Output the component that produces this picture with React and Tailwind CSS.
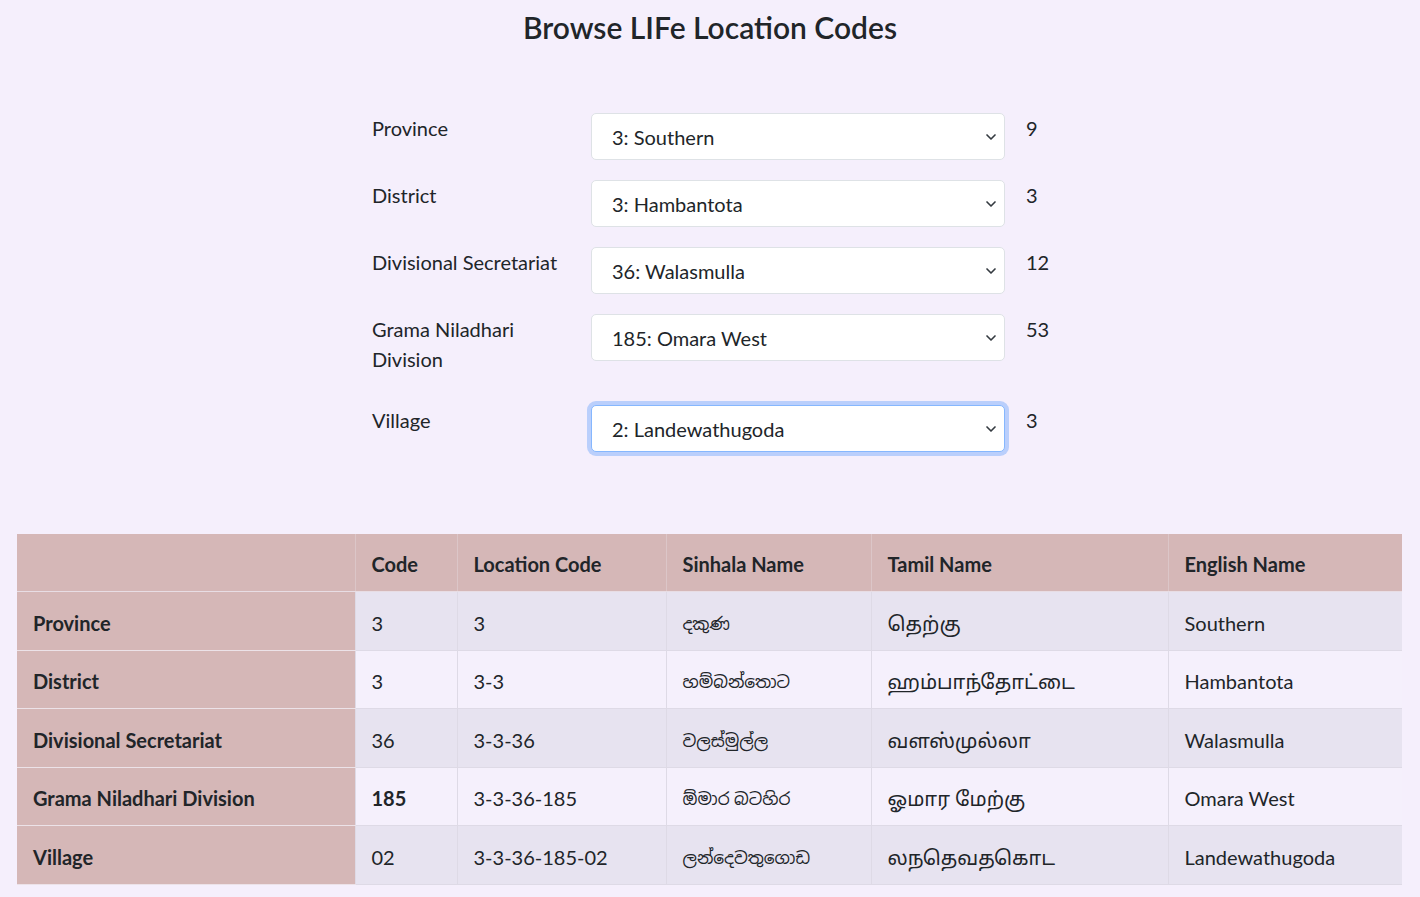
import React from "react";
import { ChevronDown } from "lucide-react";

const font = { fontFamily: "Lato, 'Noto Sans', 'Noto Sans Sinhala', 'Noto Sans Tamil', 'Iskoola Pota', Latha, sans-serif" };

const levels = [
    { label: "Province", value: "3: Southern", count: "9" },
    { label: "District", value: "3: Hambantota", count: "3" },
    { label: "Divisional Secretariat", value: "36: Walasmulla", count: "12" },
    { label: "Grama Niladhari Division", value: "185: Omara West", count: "53", wrap: true },
    { label: "Village", value: "2: Landewathugoda", count: "3", focused: true },
];

const rows = [
    { name: "Province", code: "3", loc: "3", si: "දකුණ", ta: "தெற்கு", en: "Southern" },
    { name: "District", code: "3", loc: "3-3", si: "හම්බන්තොට", ta: "ஹம்பாந்தோட்டை", en: "Hambantota" },
    { name: "Divisional Secretariat", code: "36", loc: "3-3-36", si: "වලස්මුල්ල", ta: "வளஸ்முல்லா", en: "Walasmulla" },
    { name: "Grama Niladhari Division", code: "185", loc: "3-3-36-185", si: "ඕමාර බටහිර", ta: "ஓமார மேற்கு", en: "Omara West", bold: true },
    { name: "Village", code: "02", loc: "3-3-36-185-02", si: "ලන්දෙවතුගොඩ", ta: "லநதெவதகொட", en: "Landewathugoda" },
];

const cols = ["w-[338px]", "w-[102px]", "w-[209px]", "w-[205px]", "w-[297px]", "w-[234px]"];

function LevelRow({ item }) {
    return (
        <div className="flex items-start mb-[20px]">
            <label className={`w-[219px] shrink-0 text-[20px] leading-[30px] text-[#212529] ${item.wrap ? "pr-[40px] pb-[11px]" : "pb-[9px]"}`}>
                {item.label}
            </label>
            <div
                className={`relative w-[414px] h-[47px] shrink-0 bg-white rounded-[5px] border flex items-center pl-[20px] text-[20px] text-[#212529] ${
                    item.focused
                        ? "border-[#86b7fe] shadow-[0_0_0_4px_rgba(13,110,253,0.25)]"
                        : "border-[#dee2e6]"
                }`}
            >
                <span className="leading-[30px] pt-[1px]">{item.value}</span>
                <ChevronDown size={16} strokeWidth={2.5} className="absolute right-[5px] top-1/2 -translate-y-1/2 text-[#343a40]" />
            </div>
            <div className="pl-[21px] text-[20px] leading-[30px] text-[#212529]">{item.count}</div>
        </div>
    );
}

export default function App() {
    return (
        <div className="min-h-screen bg-[#f5effc] text-[#212529]" style={font}>
            <h1 className="text-center text-[30px] font-semibold leading-[38px] pt-[8px] text-[#212529]">
                Browse LIFe Location Codes
            </h1>

            {/* Selectors */}
            <div className="flex justify-center pt-[67px]">
                <div className="w-[676px]">
                    {levels.map((l) => (
                        <LevelRow key={l.label} item={l} />
                    ))}
                </div>
            </div>

            {/* Result table */}
            <div className="pl-[17px] pr-[18px] pt-[62px]">
                <table className="w-[1385px] border-collapse text-[20px] table-fixed">
                    <thead>
                        <tr className="bg-[#d5b7b7]">
                            {["", "Code", "Location Code", "Sinhala Name", "Tamil Name", "English Name"].map((h, i) => (
                                <th
                                    key={i}
                                    className={`${cols[i]} text-left font-bold px-[16px] pt-[15px] pb-[11px] leading-[31px] border-b border-[#e8dde4] ${
                                        i > 0 ? "border-l border-l-[#dcc6c8]" : ""
                                    }`}
                                >
                                    {h}
                                </th>
                            ))}
                        </tr>
                    </thead>
                    <tbody>
                        {rows.map((r, ri) => {
                            const bg = ri % 2 === 0 ? "bg-[#e7e3f0]" : "bg-[#f5f0fc]";
                            return (
                                <tr key={r.name}>
                                    <th className="bg-[#d5b7b7] text-left font-bold px-[16px] pt-[16.5px] pb-[12px] leading-[29px] border-b border-[#ece2e8]">
                                        {r.name}
                                    </th>
                                    {[r.code, r.loc, r.si, r.ta, r.en].map((v, ci) => (
                                        <td
                                            key={ci}
                                            className={`${bg} px-[16px] pt-[16.5px] pb-[12px] leading-[29px] border-b border-l border-[#dedae6] ${
                                                ci === 0 && r.bold ? "font-bold" : ""
                                            } ${ci === 2 ? "text-[17px]" : ""}`}
                                        >
                                            {v}
                                        </td>
                                    ))}
                                </tr>
                            );
                        })}
                    </tbody>
                </table>
            </div>
        </div>
    );
}
